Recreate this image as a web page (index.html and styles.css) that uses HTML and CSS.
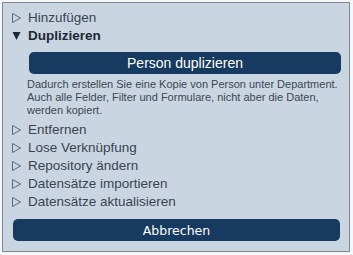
FILE: index.html
```html
<!DOCTYPE html>
<html lang="de">
<head>
    <meta charset="UTF-8">
    <title>Aktionen</title>
    <link rel="stylesheet" href="styles.css">
</head>
<body>
    <div class="panel">
        <ul class="actions">
            <li class="action"><svg class="arrow" viewBox="0 0 10 10"><path d="M0.5 0.5 L8.5 5 L0.5 9.5 Z" /></svg>Hinzufügen</li>
            <li class="action open"><svg class="arrow" viewBox="0 0 10 10"><path d="M0.5 1 L8.5 1 L4.5 9 Z" /></svg>Duplizieren</li>
        </ul>
        <div class="details">
            <button class="btn">Person duplizieren</button>
            <p class="hint">Dadurch erstellen Sie eine Kopie von Person unter Department. Auch alle Felder, Filter und Formulare, nicht aber die Daten, werden kopiert.</p>
        </div>
        <ul class="actions">
            <li class="action"><svg class="arrow" viewBox="0 0 10 10"><path d="M0.5 0.5 L8.5 5 L0.5 9.5 Z" /></svg>Entfernen</li>
            <li class="action"><svg class="arrow" viewBox="0 0 10 10"><path d="M0.5 0.5 L8.5 5 L0.5 9.5 Z" /></svg>Lose Verknüpfung</li>
            <li class="action"><svg class="arrow" viewBox="0 0 10 10"><path d="M0.5 0.5 L8.5 5 L0.5 9.5 Z" /></svg>Repository ändern</li>
            <li class="action"><svg class="arrow" viewBox="0 0 10 10"><path d="M0.5 0.5 L8.5 5 L0.5 9.5 Z" /></svg>Datensätze importieren</li>
            <li class="action"><svg class="arrow" viewBox="0 0 10 10"><path d="M0.5 0.5 L8.5 5 L0.5 9.5 Z" /></svg>Datensätze aktualisieren</li>
        </ul>
        <button class="btn cancel">Abbrechen</button>
    </div>
</body>
</html>
```

FILE: styles.css
```css
body {
    margin: 0;
    background: #f4f6f8;
    font-family: "Liberation Sans", Arial, sans-serif;
}

.panel {
    margin: 2px;
    width: 348px;
    height: 250px;
    box-sizing: border-box;
    border: 1px solid #7d8895;
    background: #c9d6e2;
    padding: 6px 8px 0 9px;
}

.actions {
    list-style: none;
    margin: 0;
    padding: 0;
}

.action {
    font-size: 13.5px;
    line-height: 18px;
    color: #3a4450;
    display: flex;
    align-items: center;
}

.action.open {
    font-weight: bold;
    color: #1d2733;
}

.arrow {
    width: 10px;
    height: 10px;
    margin-right: 6px;
    fill: none;
    stroke: #5d6874;
    stroke-width: 1;
}

.open .arrow {
    fill: #1d2733;
    stroke: none;
}

.details {
    padding: 7px 0 4px 17px;
}

.btn {
    display: block;
    width: 100%;
    height: 22px;
    border: none;
    border-radius: 5px;
    background: #173a60;
    color: #fff;
    font-family: "Liberation Sans", Arial, sans-serif;
    font-size: 14px;
    padding: 0;
}

.hint {
    margin: 4px -5px 0 -2px;
    font-size: 11px;
    line-height: 13px;
    color: #3c4650;
}

.cancel {
    margin: 8px 0 0 1px;
    width: 327px;
    font-family: "DejaVu Sans", Verdana, sans-serif;
    font-size: 12.5px;
}
```
